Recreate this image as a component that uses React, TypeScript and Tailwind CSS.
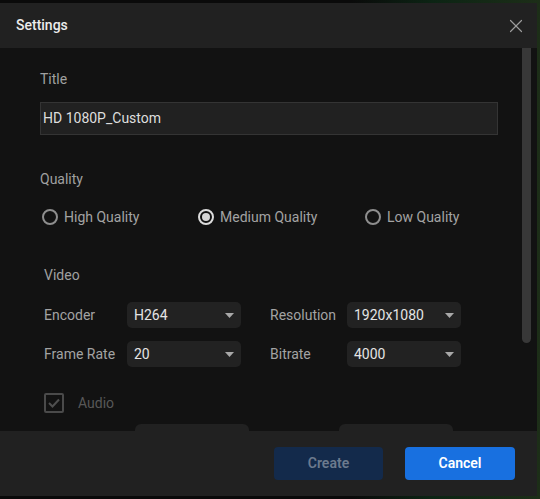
import { X } from "lucide-react";

function Radio({ label, checked }: { label: string; checked?: boolean }) {
  return (
    <div className="flex items-center gap-[6px]">
      <span
        className={`flex h-[16px] w-[16px] items-center justify-center rounded-full border-2 ${
          checked ? "border-[#dcdcdc]" : "border-[#8e8e8e]"
        }`}
      >
        {checked && <span className="h-[8px] w-[8px] rounded-full bg-[#d6d6d6]" />}
      </span>
      <span className="text-[14px] text-[#a3a3a3]">{label}</span>
    </div>
  );
}

function Select({ value }: { value: string }) {
  return (
    <div className="flex h-[26px] w-[114px] items-center justify-between rounded-[5px] bg-[#222222] pl-[7px] pr-[7px]">
      <span className="text-[14px] text-[#e4e4e4]">{value}</span>
      <svg width="9" height="5" viewBox="0 0 9 5">
        <path d="M0 0h9L4.5 5z" fill="#a8a8a8" />
      </svg>
    </div>
  );
}

export default function App() {
  return (
    <div
      className="h-[499px] w-[540px] bg-[linear-gradient(90deg,#0a0a0a_0%,#0a0a0a_65%,#0c2414_80%,#1d2e18_100%)] pb-[3px] pr-[3px] pt-[3px]"
      style={{ fontFamily: "Roboto, 'Noto Sans', sans-serif" }}
    >
      <div className="flex h-[493px] w-[537px] flex-col">
        {/* header */}
        <div className="flex h-[45px] shrink-0 items-center justify-between bg-[#212121] pl-[16px] pr-[10px]">
          <span className="text-[14px] font-medium text-[#ececec]">Settings</span>
          <X size={22} strokeWidth={1.3} className="text-[#9c9c9c]" />
        </div>

        {/* body */}
        <div className="relative flex-1 overflow-hidden bg-[#121212]">
          <div className="absolute right-[6px] top-0 h-[295px] w-[9px] rounded-b-[5px] bg-[#383838]" />

          <div className="pl-[40px]">
            <div className="mt-[21px] text-[14px] leading-[20px] text-[#a0a0a0]">Title</div>
            <div className="mt-[13px] flex h-[33px] w-[458px] items-center border border-[#343434] bg-[#212121] pl-[2px]">
              <span className="text-[14px] text-[#dedede]">HD 1080P_Custom</span>
            </div>

            <div className="mt-[34px] text-[14px] leading-[20px] text-[#a0a0a0]">Quality</div>
            <div className="mt-[18px] flex h-[20px] items-center pl-[2px]">
              <div className="w-[156px]">
                <Radio label="High Quality" />
              </div>
              <div className="w-[167px]">
                <Radio label="Medium Quality" checked />
              </div>
              <Radio label="Low Quality" />
            </div>

            <div className="pl-[4px]">
              <div className="mt-[38px] text-[14px] leading-[20px] text-[#a0a0a0]">Video</div>

              <div className="mt-[17px] flex items-center">
                <span className="w-[83px] text-[14px] text-[#a3a3a3]">Encoder</span>
                <Select value="H264" />
                <span className="ml-[29px] w-[77px] text-[14px] text-[#a3a3a3]">Resolution</span>
                <Select value="1920x1080" />
              </div>

              <div className="mt-[13px] flex items-center">
                <span className="w-[83px] text-[14px] text-[#a3a3a3]">Frame Rate</span>
                <Select value="20" />
                <span className="ml-[29px] w-[77px] text-[14px] text-[#a3a3a3]">Bitrate</span>
                <Select value="4000" />
              </div>

              <div className="mt-[26px] flex h-[20px] items-center gap-[14px]">
                <span className="flex h-[20px] w-[20px] items-center justify-center rounded-[2px] border-2 border-[#4a4a4a]">
                  <svg width="12" height="10" viewBox="0 0 12 10">
                    <path d="M1 5l3.5 3.5L11 1.5" fill="none" stroke="#4f4f4f" strokeWidth="2" />
                  </svg>
                </span>
                <span className="text-[14px] text-[#585858]">Audio</span>
              </div>

              <div className="mt-[11px] flex">
                <div className="ml-[91px] h-[26px] w-[114px] rounded-[6px] bg-[#212121]" />
                <div className="ml-[90px] h-[26px] w-[114px] rounded-[6px] bg-[#212121]" />
              </div>
            </div>
          </div>
        </div>

        {/* footer */}
        <div className="flex h-[65px] shrink-0 items-start justify-end gap-[22px] bg-[#212121] pr-[22px] pt-[16px]">
          <button className="h-[33px] w-[109px] rounded-[4px] bg-[#132a4b] text-[14px] font-semibold text-[#6c7a8e]">
            Create
          </button>
          <button className="h-[33px] w-[110px] rounded-[4px] bg-[#1870e0] text-[14px] font-semibold text-white">
            Cancel
          </button>
        </div>
      </div>
    </div>
  );
}
